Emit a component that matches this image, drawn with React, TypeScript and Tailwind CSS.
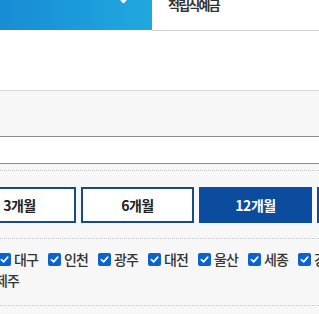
import React from 'react';

const REGIONS = ['대구', '인천', '광주', '대전', '울산', '세종', '강원'];
const PERIODS = ['3개월', '6개월', '12개월', '24개월'];

function Check() {
  return (
    <span className="flex h-[13px] w-[13px] shrink-0 items-center justify-center rounded-[2px] bg-[#0b62d0]">
      <svg width="9" height="9" viewBox="0 0 10 10" fill="none">
        <path d="M1.5 5.2 L4 7.6 L8.6 2.4" stroke="#fff" strokeWidth="1.9" strokeLinecap="round" strokeLinejoin="round" />
      </svg>
    </span>
  );
}

function Region({ label }: { label: string }) {
  return (
    <div className="flex shrink-0 items-center gap-[3px] pr-[8px]">
      <Check />
      <span className="w-[26px] whitespace-nowrap">{label}</span>
    </div>
  );
}

export default function App() {
  return (
    <div
      className="h-[314px] w-[319px] overflow-hidden bg-white text-[#333]"
      style={{ fontFamily: '"Noto Sans CJK KR", "Noto Sans", sans-serif' }}
    >
      {/* product header */}
      <div className="flex h-[31px]">
        <div className="relative h-[30px] w-[152px] bg-gradient-to-r from-[#198cd6] to-[#20a9de]">
          <svg className="absolute left-[118px] top-0" width="11" height="5" viewBox="0 0 11 5" fill="none">
            <path d="M1 -3 L5.5 2 L10 -3" stroke="#fff" strokeWidth="2.4" strokeLinecap="round" strokeLinejoin="round" />
          </svg>
        </div>
        <div className="flex-1 border-b border-[#d3d3d3] pl-[16px]">
          <div className="-mt-[4px] text-[13px] font-semibold leading-[17px] tracking-[-1.8px] text-[#333]">적립식예금</div>
        </div>
      </div>

      <div className="h-[60px] border-b border-[#dadada] bg-white" />

      <div className="bg-[#f7f7f7]">
        <div className="h-[45px]" />
        <div className="h-[28px] border-y border-[#8c8c8c] bg-white" />
        <div className="h-[6px]" />
        <div className="border-t border-dotted border-[#c8c8c8]" />

        {/* period buttons */}
        <div className="ml-[-37px] mt-[16px] flex gap-[5px]">
          {PERIODS.map((p, i) => (
            <div
              key={p}
              className={
                i === 2
                  ? 'flex h-[36px] w-[113px] shrink-0 items-center justify-center border-2 border-[#0c4c9e] bg-[#0c4c9e] text-[14px] font-bold tracking-[-0.5px] text-white'
                  : 'flex h-[36px] w-[113px] shrink-0 items-center justify-center border-2 border-[#164a88] bg-white text-[14px] font-bold tracking-[-0.5px] text-[#222]'
              }
            >
              {p}
            </div>
          ))}
        </div>

        <div className="mt-[15px] border-t border-dotted border-[#c8c8c8]" />

        {/* regions */}
        <div className="pt-[10px] pb-[14px] text-[14px] font-medium leading-[21px] tracking-[-1px]">
          <div className="ml-[-2px] flex">
            {REGIONS.map(r => <Region key={r} label={r} />)}
          </div>
          <div className="ml-[-21px] flex">
            <Region label="제주" />
          </div>
        </div>

        <div className="border-t border-dotted border-[#c8c8c8]" />
        <div className="h-[10px]" />
      </div>
    </div>
  );
}
